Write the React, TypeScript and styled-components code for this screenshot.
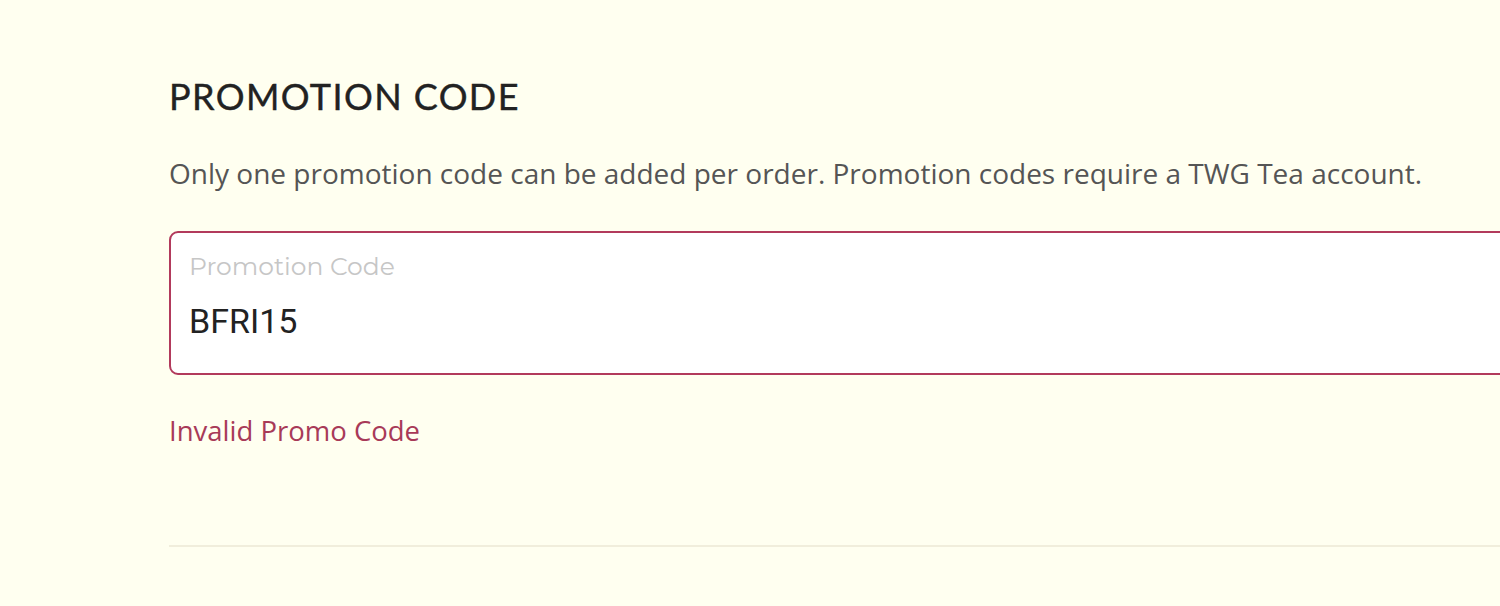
import styled, { createGlobalStyle } from "styled-components";

const GlobalStyle = createGlobalStyle`
  html, body {
    margin: 0;
    padding: 0;
    background: #fffff0;
    overflow: hidden;
  }
`;

const Page = styled.main`
  width: 1500px;
  height: 606px;
  background: #fffff0;
  padding: 74px 0 0 169px;
  box-sizing: border-box;
  overflow: hidden;
`;

const Section = styled.section`
  width: 1420px;
  display: flex;
  flex-direction: column;
`;

const Heading = styled.h2`
  margin: 0;
  font-family: "Lato", "Noto Sans", sans-serif;
  font-weight: 400;
  font-size: 36px;
  line-height: 44px;
  letter-spacing: 1.4px;
  color: #222222;
  text-transform: uppercase;
  -webkit-text-stroke: 0.4px #222222;
`;

const Note = styled.p`
  margin: 37px 0 0;
  font-family: "Open Sans", "Noto Sans", sans-serif;
  font-size: 28px;
  line-height: 36px;
  color: #555555;
`;

const Field = styled.label<{ $invalid?: boolean }>`
  margin-top: 40px;
  height: 144px;
  box-sizing: border-box;
  border: 2px solid ${({ $invalid }) => ($invalid ? "#b23a5c" : "#cccccc")};
  border-radius: 9px;
  background: #ffffff;
  padding: 18px 18px 0;
  display: flex;
  flex-direction: column;
`;

const FieldLabel = styled.span`
  font-family: "Montserrat", "Roboto", sans-serif;
  font-size: 25px;
  line-height: 30px;
  color: #c6c6c6;
`;

const FieldInput = styled.input`
  margin-top: 18px;
  border: none;
  outline: none;
  background: transparent;
  padding: 0;
  font-family: "Roboto", "Noto Sans", sans-serif;
  font-size: 34px;
  line-height: 44px;
  color: #222222;
`;

const ErrorText = styled.div`
  margin-top: 38px;
  font-family: "Open Sans", "Noto Sans", sans-serif;
  font-size: 27.5px;
  line-height: 36px;
  color: #a83a58;
`;

const Divider = styled.hr`
  margin: 96px 0 0;
  border: none;
  border-top: 2px solid #f1eedc;
`;

export default function App() {
  return (
    <>
      <GlobalStyle />
      <Page>
        <Section>
          <Heading>Promotion Code</Heading>
          <Note>
            Only one promotion code can be added per order. Promotion codes require a TWG Tea account.
          </Note>
          <Field $invalid>
            <FieldLabel>Promotion Code</FieldLabel>
            <FieldInput defaultValue="BFRI15" />
          </Field>
          <ErrorText>Invalid Promo Code</ErrorText>
          <Divider />
        </Section>
      </Page>
    </>
  );
}
